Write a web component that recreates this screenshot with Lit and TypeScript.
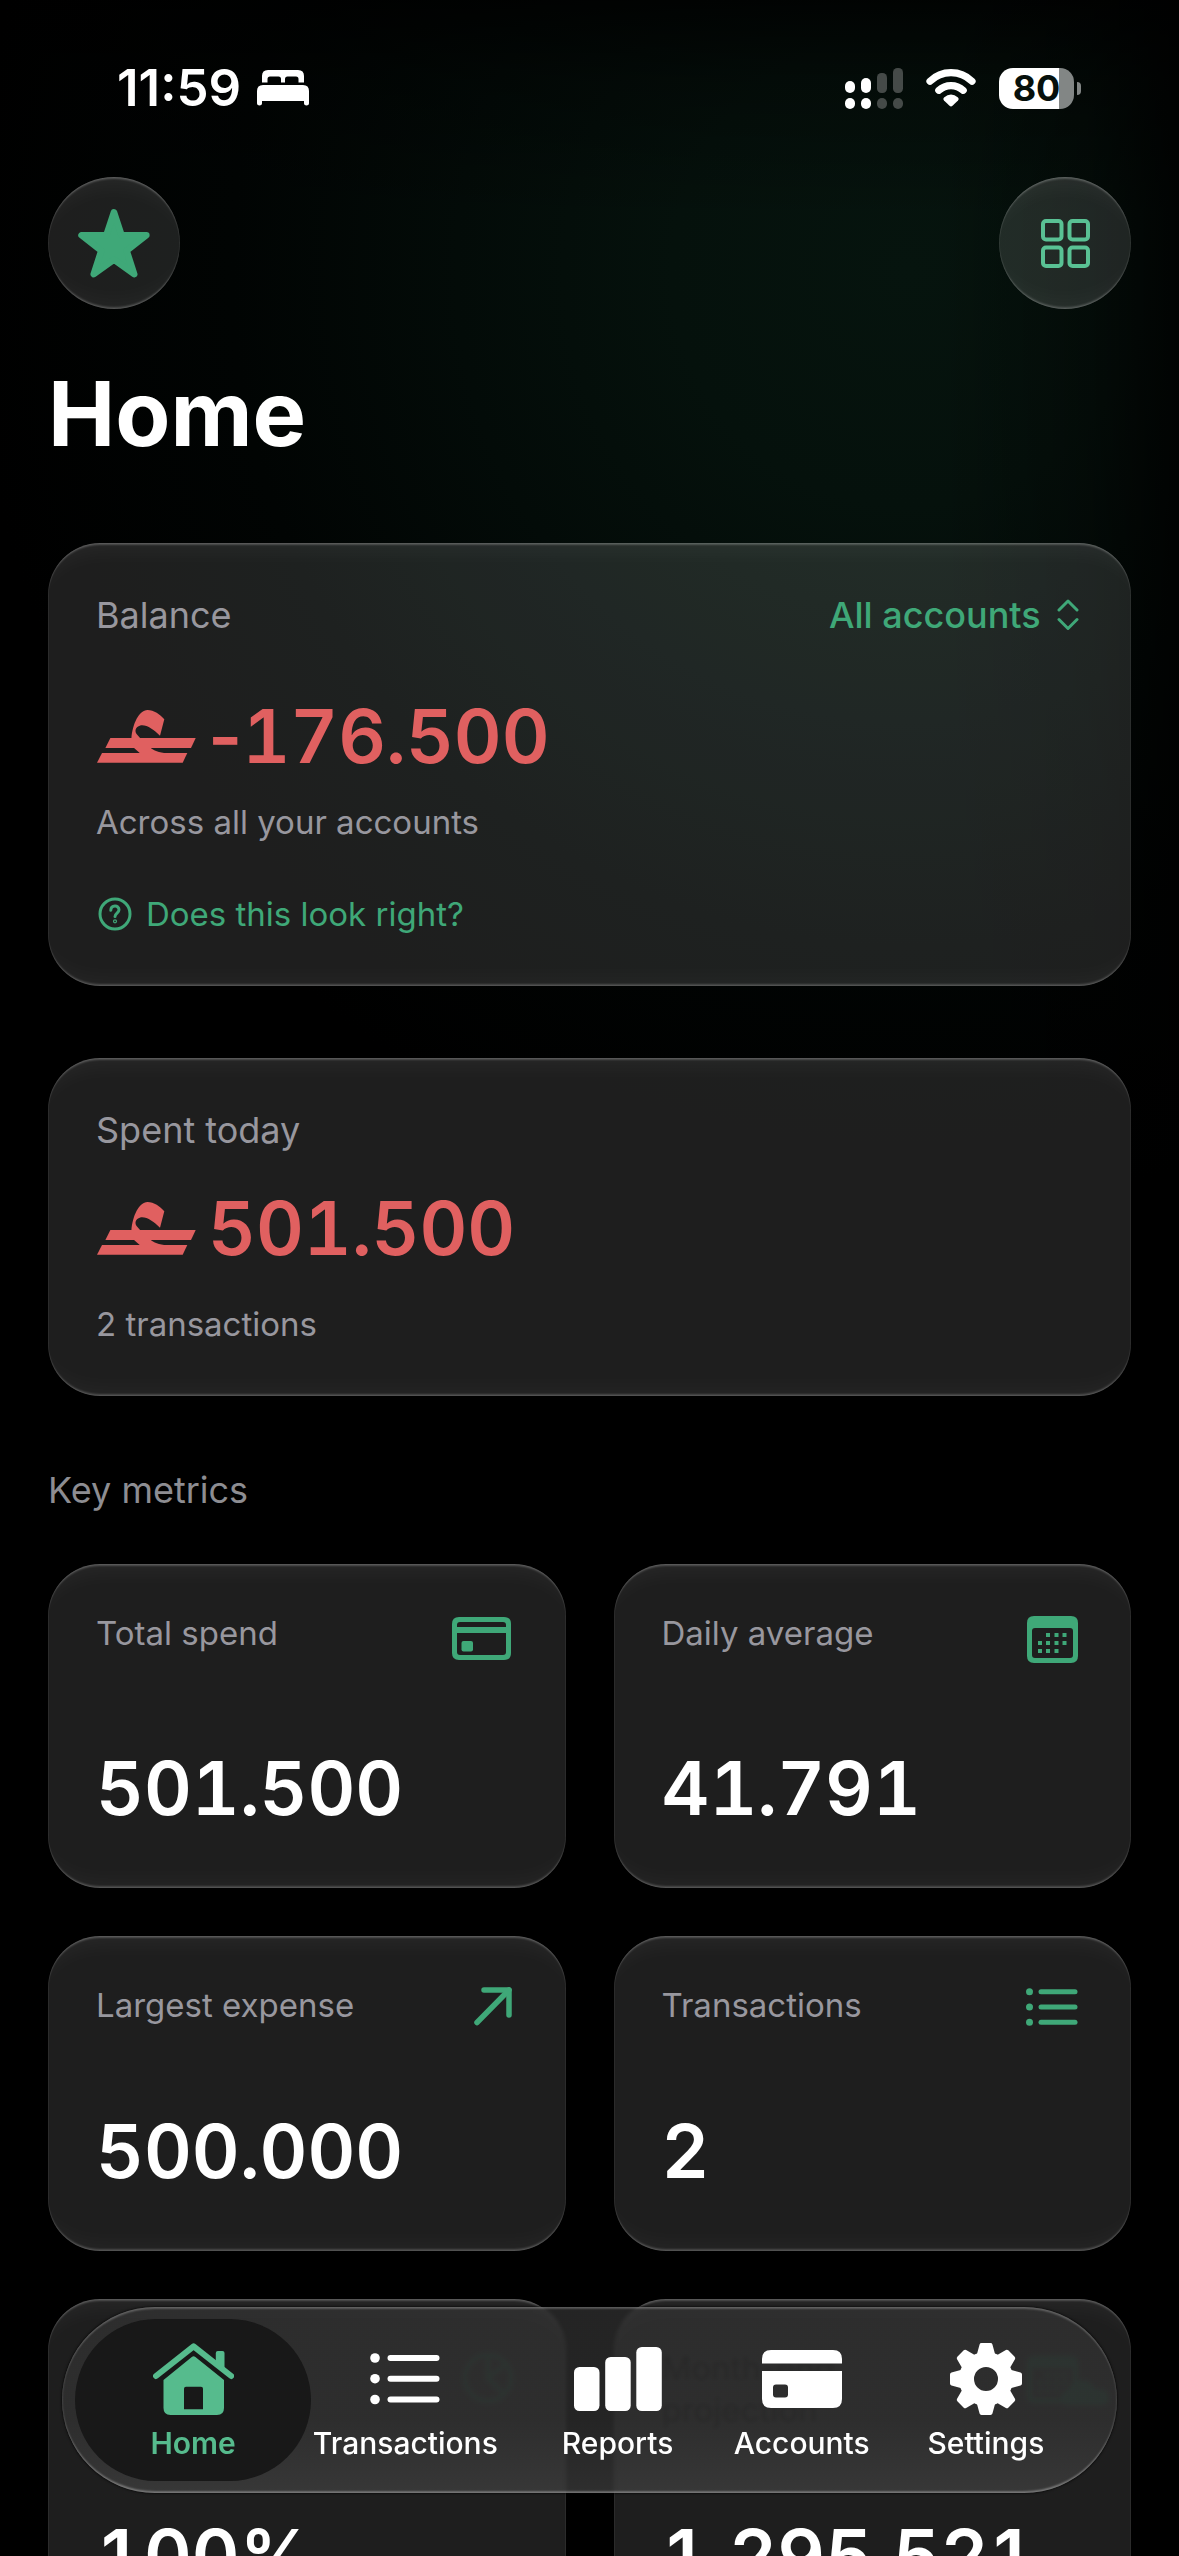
import { LitElement, html, css, svg, nothing } from "lit";
import { customElement, property } from "lit/decorators.js";
import { classMap } from "lit/directives/class-map.js";

const star = html`<svg width="74" height="72" viewBox="0 0 72 70" aria-hidden="true">
  <path d="M36 4 L43.500 27 H68 L48.500 42.500 L56 66 L36 51.500 L16 66 L23.500 42.500 L4 27 H28.500 Z"
    fill="currentColor" stroke="currentColor" stroke-width="6.500" stroke-linejoin="round" transform="translate(.5 1.300) scale(.985 .97)"/>
</svg>`;

const gridIcon = html`<svg width="49" height="49" viewBox="0 0 49 49" fill="none" stroke="currentColor" stroke-width="4" aria-hidden="true">
  <rect x="2" y="2" width="18.500" height="18.500" rx="3"/>
  <rect x="28.500" y="2" width="18.500" height="18.500" rx="3"/>
  <rect x="2" y="28.500" width="18.500" height="18.500" rx="3"/>
  <rect x="28.500" y="28.500" width="18.500" height="18.500" rx="3"/>
</svg>`;

const bed = html`<svg width="52" height="36" viewBox="0 0 52 36" fill="currentColor" aria-hidden="true">
  <path d="M5 12.500 V6 Q5 0 11 0 H41 Q47 0 47 6 V12.500 H41.500 V9 Q41.500 6.500 39 6.500 H30.500 Q28 6.500 28 9 V12.500 H24 V9 Q24 6.500 21.500 6.500 H13 Q10.500 6.500 10.500 9 V12.500 Z"/>
  <path d="M0 21 Q0 15 6 15 H46 Q52 15 52 21 V33.500 Q52 35.500 49.500 35.500 Q47 35.500 47 33.500 V31 H5 V33.500 Q5 35.500 2.500 35.500 Q0 35.500 0 33.500 Z"/>
</svg>`;

const signal = html`<svg width="58" height="41" viewBox="0 0 58 41" fill="#fff" aria-hidden="true">
  <rect x="0" y="13" width="10" height="12" rx="5"/>
  <rect x="16" y="10" width="10" height="15" rx="5"/>
  <g fill="#454a48">
    <rect x="32" y="5" width="10" height="20" rx="4.500"/>
    <rect x="48" y="0" width="10" height="25" rx="4.500"/>
    <rect x="32" y="30" width="10" height="11" rx="5"/>
    <rect x="48" y="30" width="10" height="11" rx="5"/>
  </g>
  <rect x="0" y="30" width="10" height="11" rx="5"/>
  <rect x="16" y="30" width="10" height="11" rx="5"/>
</svg>`;

const wifi = html`<svg width="50" height="38" viewBox="0 0 50 38" fill="none" stroke="#fff" stroke-width="7.200" stroke-linecap="round" aria-hidden="true">
  <path d="M4 12.200 A30 30 0 0 1 46 12.200"/>
  <path d="M12.800 21.300 A18 18 0 0 1 37.200 21.300"/>
  <path d="M18 28.500 Q25 22.500 32 28.500 Q33.500 30 32 31.500 L26.500 36.800 Q25 38 23.500 36.800 L18 31.500 Q16.500 30 18 28.500 Z" fill="#fff" stroke="none"/>
</svg>`;

const riyal = html`<svg width="100" height="53" viewBox="-1 0 100 53" fill="currentColor" role="img" aria-label="Currency">
  <path d="M13.400 28 H98.700 L94 38 H8.400 Z"/>
  <path d="M5 43 H90.300 L85.700 52.800 H0 Z"/>
  <path d="M34.400 28.500 C35.500 14 42 0 50.500 0 C57 0 63 4.500 67.300 9.200 L63 25.700 C57 19.500 49 14 43.200 15.400 C38.500 16.800 37.200 21 40 24.500 L43.500 28.500 Z"/>
  <path d="M36.500 37.500 H53 C56.500 40.500 62 42.600 70 43.300 H43 Z"/>
</svg>`;

const help = html`<svg width="36" height="34" viewBox="-2 0 36 34" fill="none" stroke="currentColor" stroke-width="3" stroke-linecap="round" stroke-linejoin="round" aria-hidden="true">
  <circle cx="17" cy="17" r="15"/>
  <path d="M12.800 13.200 C13 7.800 21 7.800 21 12.800 C21 16 17 16.200 17 19.500"/>
  <circle cx="17" cy="24.300" r=".6"/>
</svg>`;

const chevrons = html`<svg width="22" height="32" viewBox="0 0 22 32" fill="none" stroke="currentColor" stroke-width="3" stroke-linecap="round" stroke-linejoin="round" aria-hidden="true">
  <path d="M2 11 L11 2 L20 11"/><path d="M2 20.500 L11 29.500 L20 20.500"/>
</svg>`;

const calendarShape = svg`
  <path fill-rule="evenodd" d="M7 0 H44 Q51 0 51 7 V40 Q51 47 44 47 H7 Q0 47 0 40 V7 Q0 0 7 0 Z M8 12 Q5 12 5 15 V39 Q5 42 8 42 H43 Q46 42 46 39 V15 Q46 12 43 12 Z"/>
  <path d="M19 17h4v4h-4z M27.500 17h4v4h-4z M35.500 17h4v4h-4z M11 25h4v4h-4z M19 25h4v4h-4z M27.500 25h4v4h-4z M35.500 25h4v4h-4z M11 33h4v4h-4z M19 33h4v4h-4z M27.500 33h4v4h-4z"/>`;

const metricIcons = {
  card: html`<svg width="62" height="51" viewBox="0 -5 62 51" fill="currentColor" aria-hidden="true">
    <path fill-rule="evenodd" d="M7 0 H52 Q59 0 59 7 V36 Q59 43 52 43 H7 Q0 43 0 36 V7 Q0 0 7 0 Z M8 5 Q5 5 5 8 V10 H54 V8 Q54 5 51 5 Z M5 16 V35 Q5 38 8 38 H51 Q54 38 54 35 V16 Z"/>
    <rect x="9.500" y="24" width="11.500" height="10.500" rx="2"/>
  </svg>`,
  calendar: html`<svg width="52" height="51" viewBox="0 -4 52 51" fill="currentColor" aria-hidden="true">${calendarShape}</svg>`,
  arrow: html`<svg width="40" height="42" viewBox="0 -3 40 42" fill="none" stroke="currentColor" stroke-width="5.500" stroke-linecap="round" stroke-linejoin="round" aria-hidden="true">
    <path d="M10 3 H35 V28"/><path d="M35 3 L3 35.500"/>
  </svg>`,
  list: html`<svg width="53" height="42" viewBox="0 -4 53 42" fill="currentColor" aria-hidden="true">
    <circle cx="3.500" cy="3.800" r="3.500"/><circle cx="3.500" cy="19" r="3.500"/><circle cx="3.500" cy="34.200" r="3.500"/>
    <rect x="12.500" y="1.300" width="39" height="5" rx="2.500"/><rect x="12.500" y="16.500" width="39" height="5" rx="2.500"/><rect x="12.500" y="31.700" width="39" height="5" rx="2.500"/>
  </svg>`,
  pie: html`<svg width="52" height="58" viewBox="0 -6 52 58" fill="none" stroke="currentColor" stroke-width="4" aria-hidden="true">
    <circle cx="26" cy="25" r="23"/><path d="M26 2 V25 L44 11 M26 25 L42 41"/>
  </svg>`,
  forecast: html`<svg width="52" height="58" viewBox="0 -9 52 58" overflow="visible" fill="currentColor" aria-hidden="true">
    ${calendarShape}<path d="M40 49 Q34 49 34 42 Q34 35 41 34 Q44 24 54 24 Q64 24 68 33 Q82 32 82 42 Q82 49 75 49 Z"/>
  </svg>`,
};

const tabIcons = {
  home: html`<svg width="81" height="72" viewBox="0 0 81 72" fill="currentColor" aria-hidden="true">
    <path d="M3 33 L40.600 3.300 L78.200 33" fill="none" stroke="currentColor" stroke-width="6" stroke-linecap="round" stroke-linejoin="round"/>
    <path d="M62.800 22 V10 Q62.800 8 64.800 8 H69.500 Q71.500 8 71.500 10 V28 Z"/>
    <path fill-rule="evenodd" d="M38.800 14 Q40.600 12.500 42.400 14 L71 37 V65 Q71 72 64 72 H17.500 Q10.500 72 10.500 65 V37 Z M33 43.700 Q31 43.700 31 45.700 V66.300 H50 V45.700 Q50 43.700 48 43.700 Z"/>
  </svg>`,
  list: html`<svg width="70" height="72" viewBox="0 0 70 72" fill="currentColor" aria-hidden="true">
    <circle cx="5" cy="15" r="4.800"/><circle cx="5" cy="35.700" r="4.800"/><circle cx="5" cy="56.500" r="4.800"/>
    <rect x="17.500" y="12" width="52" height="6" rx="3"/><rect x="17.500" y="32.700" width="52" height="6" rx="3"/><rect x="17.500" y="53.500" width="52" height="6" rx="3"/>
  </svg>`,
  bars: html`<svg width="88" height="72" viewBox="0 0 88 72" fill="currentColor" aria-hidden="true">
    <rect x="0" y="24" width="25.500" height="44" rx="5.500"/><rect x="31.200" y="14" width="25.500" height="54" rx="5.500"/><rect x="62.300" y="4" width="25.500" height="64" rx="5.500"/>
  </svg>`,
  card: html`<svg width="80" height="72" viewBox="0 0 80 72" fill="currentColor" aria-hidden="true">
    <path d="M0 20.500 V16 Q0 7 9 7 H71 Q80 7 80 16 V20.500 Z"/>
    <path fill-rule="evenodd" d="M0 28 H80 V56 Q80 65 71 65 H9 Q0 65 0 56 Z M14 41.500 Q11 41.500 11 44.500 V51.500 Q11 54.500 14 54.500 H23 Q26 54.500 26 51.500 V44.500 Q26 41.500 23 41.500 Z"/>
  </svg>`,
  gear: html`<svg width="72" height="72" viewBox="-36 -36 72 72" fill="currentColor" aria-hidden="true">
    <circle r="19.500" fill="none" stroke="currentColor" stroke-width="15"/>
    ${[0, 45, 90, 135, 180, 225, 270, 315].map(
      (a) => svg`<path transform="rotate(${a})" d="M-7.500 -23 L-4.500 -34 H4.500 L7.500 -23 Z" stroke="currentColor" stroke-width="4" stroke-linejoin="round"/>`,
    )}
  </svg>`,
};

type MetricIcon = keyof typeof metricIcons;
type TabIcon = keyof typeof tabIcons;

const glass = css`
  .glass {
    background: rgba(255, 255, 255, 0.118);
    box-shadow:
      inset 0 0 0 1px rgba(255, 255, 255, 0.05),
      inset 0 3px 2px -1px rgba(255, 255, 255, 0.2),
      inset 0 -3px 2px -1px rgba(255, 255, 255, 0.18),
      inset 0 30px 26px -24px rgba(255, 255, 255, 0.05),
      inset 0 -30px 26px -24px rgba(255, 255, 255, 0.04);
  }
`;

@customElement("metric-card")
export class MetricCard extends LitElement {
  @property() label = "";
  @property() value = "";
  @property() icon: MetricIcon = "card";
  @property({ type: Boolean }) covered = false;

  static styles = [
    glass,
    css`
      :host {
        display: block;
      }
      .card {
        box-sizing: border-box;
        height: 100%;
        display: flex;
        flex-direction: column;
        padding: 48px 48px 56px;
        border-radius: 52px;
      }
      .head {
        display: flex;
        justify-content: space-between;
        align-items: flex-start;
        gap: 16px;
        padding-bottom: 81px;
      }
      .label {
        margin: 0;
        max-width: 300px;
        font-size: 33px;
        line-height: 42px;
        font-weight: 400;
        color: #98979e;
      }
      .icon {
        display: flex;
        margin-right: 4px;
        color: #3fa878;
      }
      .covered .label {
        color: #0c0c0c;
      }
      .covered .icon {
        color: #1a2f26;
      }
      .value {
        margin: auto 0 0;
        font-size: 74px;
        line-height: 88px;
        font-weight: 600;
        font-variant-numeric: tabular-nums;
        color: #fff;
      }
    `,
  ];

  render() {
    return html`<article class=${classMap({ card: true, glass: true, covered: this.covered })}>
      <div class="head">
        ${this.label ? html`<h3 class="label">${this.label}</h3>` : html`<span></span>`}
        <span class="icon">${metricIcons[this.icon]}</span>
      </div>
      <p class="value">${this.value}</p>
    </article>`;
  }
}

@customElement("tab-bar")
export class TabBar extends LitElement {
  private tabs: { label: string; icon: TabIcon; current?: boolean }[] = [
    { label: "Home", icon: "home", current: true },
    { label: "Transactions", icon: "list" },
    { label: "Reports", icon: "bars" },
    { label: "Accounts", icon: "card" },
    { label: "Settings", icon: "gear" },
  ];

  static styles = css`
    :host {
      display: block;
    }
    .bar {
      display: grid;
      grid-template-columns: minmax(0, 236fr) minmax(0, 188fr) minmax(0, 236fr) minmax(0, 132fr) minmax(0, 236fr);
      padding: 12px 13px;
      border-radius: 93px;
      background: linear-gradient(rgba(54, 54, 54, 0.67), rgba(54, 54, 54, 0.67) 60%, rgba(66, 66, 66, 0.7));
      backdrop-filter: blur(2px);
      box-shadow:
        0 0 2px 1px rgba(0, 0, 0, 0.5),
        inset 0 0 2px 1px rgba(255, 255, 255, 0.08),
        inset 0 3px 2px -1px rgba(255, 255, 255, 0.2),
        inset 0 -3px 2px -1px rgba(255, 255, 255, 0.28);
    }
    .tab {
      display: flex;
      flex-direction: column;
      align-items: center;
      gap: 10px;
      padding: 24px 0 20px;
      border-radius: 81px;
      color: #fff;
      text-decoration: none;
      font-size: 30px;
      line-height: 36px;
      font-weight: 500;
      white-space: nowrap;
    }
    .tab svg {
      display: block;
      flex: none;
    }
    .current {
      background: #181818;
      color: #56bb8d;
      font-weight: 600;
    }
  `;

  render() {
    return html`<nav class="bar" aria-label="Main">
      ${this.tabs.map(
        (t) => html`<a
          class=${classMap({ tab: true, current: !!t.current })}
          href="#${t.label.toLowerCase()}"
          aria-current=${t.current ? "page" : nothing}
          >${tabIcons[t.icon]}<span>${t.label}</span></a
        >`,
      )}
    </nav>`;
  }
}

@customElement("app-root")
export class AppRoot extends LitElement {
  static styles = [
    glass,
    css`
      :host {
        display: block;
        height: 100vh;
        overflow: hidden;
        color: #fff;
        font-family: Inter, "Liberation Sans", sans-serif;
        background:
          linear-gradient(to left, rgba(0, 0, 0, 0.8), rgba(0, 0, 0, 0.35) 90px, transparent 240px) no-repeat,
          linear-gradient(rgba(0, 0, 0, 0.8), rgba(0, 0, 0, 0.35) 80px, transparent 220px) no-repeat,
          radial-gradient(circle 940px at 77% 270px, #06140e, #05110c 25%, #030b08 48%, #010403 72%, #000) no-repeat,
          #000;
      }
      .status {
        display: flex;
        justify-content: space-between;
        align-items: center;
        padding: 58px 98px 59px 117px;
        height: 60px;
      }
      .clock,
      .indicators {
        display: flex;
        align-items: center;
      }
      .clock {
        gap: 16px;
        font-size: 51px;
        line-height: 60px;
        font-weight: 600;
      }
      .indicators {
        gap: 23px;
      }
      .battery {
        display: flex;
        align-items: center;
        gap: 3px;
      }
      .level {
        width: 75px;
        border-radius: 14px;
        background: linear-gradient(to right, #fff 60px, #828685 60px);
        color: #06100c;
        font-size: 36px;
        line-height: 41px;
        font-weight: 700;
        text-align: center;
      }
      .nub {
        width: 4px;
        height: 13px;
        border-radius: 0 6px 6px 0;
        background: #828685;
      }
      .page {
        padding: 0 48px;
      }
      .toolbar,
      .row {
        display: flex;
        justify-content: space-between;
        align-items: center;
      }
      button {
        font: inherit;
        border: 0;
        margin: 0;
        padding: 0;
        background: none;
        color: #3fa878;
        cursor: pointer;
      }
      .round {
        display: grid;
        place-items: center;
        width: 132px;
        height: 132px;
        border-radius: 50%;
      }
      .bright {
        color: #59c194;
      }
      .round.glass {
        background: rgba(255, 255, 255, 0.118);
      }
      h1 {
        margin: 50px 0 74px;
        font-size: 90px;
        line-height: 110px;
        font-weight: 700;
      }
      .card {
        padding: 50px 48px 52px;
        border-radius: 52px;
        margin-bottom: 72px;
      }
      h2 {
        margin: 0;
        font-size: 36px;
        line-height: 44px;
        font-weight: 400;
        color: #98979e;
      }
      .picker {
        display: flex;
        align-items: center;
        gap: 16px;
        margin-right: 4px;
        color: #3fa878;
      }
      select {
        appearance: none;
        border: 0;
        margin: 0;
        padding: 0;
        background: none;
        color: inherit;
        font: inherit;
        font-size: 36px;
        line-height: 44px;
        font-weight: 500;
      }
      .amount {
        display: flex;
        align-items: center;
        gap: 12px;
        margin: 32px 0;
        color: #e06060;
        font-size: 74px;
        line-height: 88px;
        font-weight: 600;
        font-variant-numeric: tabular-nums;
      }
      .minus {
        font-variant-numeric: normal;
      }
      .balance .amount {
        margin: 55px 0 22px;
      }
      .note,
      .check {
        margin: 0;
        font-size: 33px;
        line-height: 40px;
        color: #98979e;
      }
      .check {
        display: flex;
        align-items: center;
        gap: 14px;
        margin-top: 52px;
        color: #3fa878;
      }
      .metrics {
        display: grid;
        grid-template-columns: 1fr 1fr;
        gap: 48px;
        margin-top: 52px;
      }
      .section {
        color: #8d8d92;
      }
      .tabs {
        position: fixed;
        left: 62px;
        right: 62px;
        bottom: 63px;
      }
    `,
  ];

  render() {
    return html`
      <div class="status">
        <div class="clock"><span>11:59</span>${bed}</div>
        <div class="indicators">
          ${signal} ${wifi}
          <div class="battery"><span class="level">80</span><span class="nub"></span></div>
        </div>
      </div>
      <main class="page">
        <header class="toolbar">
          <button class="round glass" aria-label="Favourites">${star}</button>
          <button class="round glass bright" aria-label="Layout">${gridIcon}</button>
        </header>
        <h1>Home</h1>

        <section class="card glass balance">
          <div class="row">
            <h2>Balance</h2>
            <label class="picker">
              <select aria-label="Account"><option>All accounts</option></select>${chevrons}
            </label>
          </div>
          <p class="amount">${riyal}<span><span class="minus">-</span>176.500</span></p>
          <p class="note">Across all your accounts</p>
          <button class="check">${help}<span>Does this look right?</span></button>
        </section>

        <section class="card glass">
          <h2>Spent today</h2>
          <p class="amount">${riyal}<span>501.500</span></p>
          <p class="note">2 transactions</p>
        </section>

        <h2 class="section">Key metrics</h2>
        <section class="metrics">
          <metric-card label="Total spend" value="501.500" icon="card"></metric-card>
          <metric-card label="Daily average" value="41.791" icon="calendar"></metric-card>
          <metric-card label="Largest expense" value="500.000" icon="arrow"></metric-card>
          <metric-card label="Transactions" value="2" icon="list"></metric-card>
          <metric-card value="100%" icon="pie" covered></metric-card>
          <metric-card label="Month-end projection" value="1.295.521" icon="forecast" covered></metric-card>
        </section>
      </main>
      <tab-bar class="tabs"></tab-bar>
    `;
  }
}
